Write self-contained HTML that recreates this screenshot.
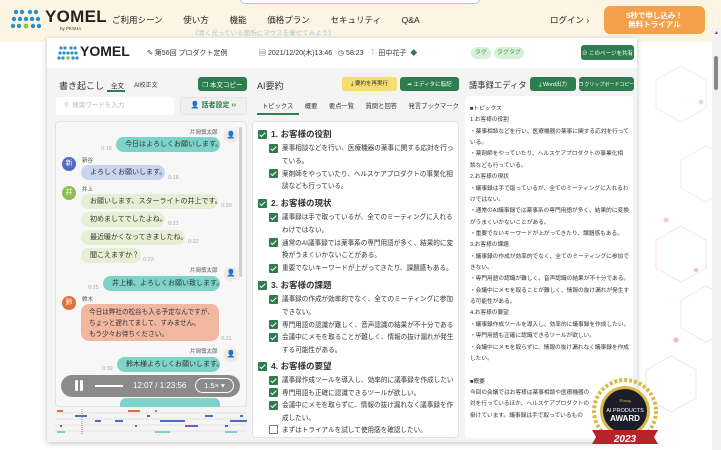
<!DOCTYPE html><html><head><meta charset="utf-8"><style>
*{box-sizing:border-box;margin:0;padding:0}
body{width:721px;height:450px;overflow:hidden;background:#fff;font-family:"Liberation Sans","Noto Sans CJK JP",sans-serif;color:#333;position:relative}
.a{position:absolute;white-space:nowrap}
.btn{position:absolute;background:#2e7d4f;color:#fff;border-radius:3px;font-size:6.5px;display:flex;align-items:center;justify-content:center;white-space:nowrap;overflow:hidden}
.bub{position:absolute;border-radius:9px;font-size:7px;padding:0 9px;height:15px;line-height:15px;color:#333;white-space:nowrap}
.t{position:absolute;font-size:5.5px;color:#aaa}
.nm{position:absolute;font-size:5.5px;color:#555}
.av{position:absolute;width:14px;height:14px;border-radius:50%;color:#fff;font-size:7px;text-align:center;line-height:14px}
.cb{display:inline-block;width:9px;height:9px;background:#2e7d4f;border-radius:1px;vertical-align:middle;margin-right:4px;position:relative}
.cb:after{content:"";position:absolute;left:3px;top:1px;width:2px;height:5px;border:solid #fff;border-width:0 1.3px 1.3px 0;transform:rotate(45deg)}
.blk{position:absolute;left:258px;width:200px;font-size:6.6px;line-height:11px;color:#333;white-space:nowrap;overflow:hidden}
.blk .h{font-size:8.5px;font-weight:bold;line-height:12px;margin-bottom:3px}
.blk .i{padding-left:11px;margin-bottom:1.5px}
.blk .c{padding-left:24px}
.ed{position:absolute;left:470px;top:104px;width:160px;font-size:5.7px;color:#333;white-space:nowrap;overflow:hidden}
.ed div{height:11.37px;line-height:11.37px}
</style></head><body>
<!-- bg hex -->
<svg class="a" style="left:636px;top:40px" width="85" height="410"><g fill="none" stroke="#eceef4" stroke-width="1"><path d="M20 40l25-14 25 14v28l-25 14-25-14z"/><path d="M45 120l25-14 25 14v28l-25 14-25-14z"/></g><g fill="none" stroke="#f6e0ea"><path d="M20 200l25-14 25 14v28l-25 14-25-14z"/><path d="M45 260l25-14 25 14v28l-25 14-25-14z"/><path d="M10 330l25-14 25 14v28l-25 14-25-14z"/></g><circle cx="30" cy="180" r="2.5" fill="#f6c8d8"/><circle cx="60" cy="230" r="2" fill="#f3b8cc"/><circle cx="40" cy="300" r="2.5" fill="#f3b8cc"/><circle cx="65" cy="62" r="2.5" fill="#d2e0f0"/></svg>
<!-- header -->
<div class="a" style="left:0;top:0;width:721px;height:42px;background:#fdf5e4"></div>
<div class="a" style="left:240px;top:-6px;width:240px;height:10px;border:1.5px solid #9ccfd2;border-radius:6px;background:#fff"></div>
<svg class="a" style="left:10px;top:8px" width="32" height="22"><g fill="#2e8ec8"><circle cx="6" cy="4" r="2.2"/><circle cx="12" cy="4" r="2.2"/><circle cx="20" cy="4" r="2.2"/><circle cx="26" cy="4" r="2.2"/><circle cx="4" cy="11" r="2.2"/><circle cx="10" cy="11" r="2.2"/><circle cx="22" cy="11" r="2.2"/><circle cx="28" cy="11" r="2.2"/><circle cx="3" cy="18" r="2.2"/><circle cx="9" cy="18" r="2.2"/><circle cx="23" cy="18" r="2.2"/><circle cx="29" cy="18" r="2.2"/></g><circle cx="16" cy="11" r="2.2" fill="#2e8ec8"/><circle cx="16" cy="18" r="2.4" fill="#8cc63f"/></svg>
<div class="a" style="left:45px;top:7px;font-size:17px;font-weight:bold;color:#222;letter-spacing:0.3px">YOMEL</div>
<div class="a" style="left:60px;top:26px;font-size:4.5px;color:#333">by PKSHA</div>
<div class="a" style="left:112px;top:14px;font-size:8.5px;color:#222;word-spacing:8px">ご利用シーン&nbsp; 使い方&nbsp; 機能&nbsp; 価格プラン&nbsp; セキュリティ&nbsp; Q&amp;A</div>
<div class="a" style="left:192px;top:27px;font-size:6.5px;color:#a9cbe0">《青く光っている箇所にマウスを乗せてみよう》</div>
<div class="a" style="left:550px;top:14px;font-size:8.5px;color:#222">ログイン ›</div>
<div class="a" style="left:604px;top:6px;width:101px;height:28px;background:#f5a04a;border-radius:6px;color:#fff;font-size:7.5px;font-weight:bold;text-align:center;line-height:9px;padding-top:5px">5秒で申し込み！<br>無料トライアル</div>
<div class="a" style="left:712px;top:28px;width:9px;height:422px;background:#f1f1f1"></div>
<div class="a" style="left:714px;top:30px;font-size:5px;color:#555">▲</div>
<div class="a" style="left:714px;top:56px;width:4px;height:34px;background:#888;border-radius:2px"></div>
<!-- app -->
<div class="a" style="left:47px;top:38px;width:590px;height:404px;background:#f4f4f4;box-shadow:0 1px 5px rgba(0,0,0,.25)"></div>
<div class="a" style="left:47px;top:38px;width:590px;height:30px;background:#fff"></div>
<svg class="a" style="left:57px;top:45px" width="22" height="15"><g fill="#2e8ec8"><circle cx="4" cy="3" r="1.6"/><circle cx="8" cy="3" r="1.6"/><circle cx="14" cy="3" r="1.6"/><circle cx="18" cy="3" r="1.6"/><circle cx="3" cy="8" r="1.6"/><circle cx="7" cy="8" r="1.6"/><circle cx="11" cy="8" r="1.6"/><circle cx="15" cy="8" r="1.6"/><circle cx="19" cy="8" r="1.6"/><circle cx="2" cy="13" r="1.6"/><circle cx="6" cy="13" r="1.6"/><circle cx="16" cy="13" r="1.6"/><circle cx="20" cy="13" r="1.6"/></g><circle cx="11" cy="13" r="1.7" fill="#8cc63f"/></svg>
<div class="a" style="left:80px;top:43px;font-size:14px;color:#222;font-weight:bold">YOMEL</div>
<div class="a" style="left:147px;top:48px;font-size:7px;color:#333">✎ 第56回 プロダクト定例</div>
<div class="a" style="left:259px;top:48px;font-size:7px;color:#333">▤ 2021/12/20(木)13:46 &nbsp; ◷ 58:23 &nbsp; <span style="color:#8cc;">Ｔ</span> 田中花子 &nbsp;<span style="color:#2e7d4f">◆</span></div>
<div class="a" style="left:471px;top:47px;width:20px;height:12px;background:#d8f0d8;border-radius:6px;font-size:6px;line-height:12px;text-align:center;color:#4a4">タグ</div>
<div class="a" style="left:494px;top:47px;width:30px;height:12px;background:#d8f0d8;border-radius:6px;font-size:6px;line-height:12px;text-align:center;color:#4a4">タグタグ</div>
<div class="btn" style="left:581px;top:45px;width:53px;height:15px;font-size:5.5px">⊘ このページを共有</div>
<!-- row2 -->
<div class="a" style="left:59px;top:79px;font-size:9px;color:#333">書き起こし</div>
<div class="a" style="left:111px;top:80px;font-size:6.5px;color:#222">全文</div>
<div class="a" style="left:107px;top:90px;width:18px;height:1.5px;background:#2e7d4f"></div>
<div class="a" style="left:134px;top:80px;font-size:6px;color:#333">AI校正文</div>
<div class="btn" style="left:198px;top:77px;width:49px;height:14px">❐ 本文コピー</div>
<div class="a" style="left:257px;top:79px;font-size:9px;color:#333">AI要約</div>
<div class="a" style="left:342px;top:77px;width:55px;height:14px;background:#f7dc6f;border-radius:3px;font-size:5.5px;text-align:center;line-height:14px;color:#333">⤓ 要約を再実行</div>
<div class="btn" style="left:400px;top:77px;width:59px;height:14px;font-size:5.5px">➦ エディタに転記</div>
<div class="a" style="left:469px;top:79px;font-size:8.3px;color:#333">議事録エディタ</div>
<div class="btn" style="left:530px;top:77px;width:46px;height:14px;font-size:5.5px">⤓ Word出力</div>
<div class="btn" style="left:579px;top:77px;width:55px;height:14px;font-size:5px">❐ クリップボードコピー</div>
<div class="a" style="left:56px;top:97px;width:118px;height:18px;background:#fff;border-radius:3px;font-size:6.5px;color:#bbb;padding-left:8px;line-height:18px">⚲ &nbsp;検索ワードを入力</div>
<div class="a" style="left:180px;top:97px;width:67px;height:18px;background:#f0f0f0;border:1px solid #e4e4e4;border-radius:3px;font-size:7px;color:#2e7d4f;text-align:center;line-height:16px;font-weight:bold">👤 話者設定 ››</div>
<div class="a" style="left:262px;top:101px;font-size:6.3px;color:#333;word-spacing:4px">トピックス&nbsp; 概要&nbsp; 要点一覧&nbsp; 質問と回答&nbsp; 発言ブックマーク</div>
<div class="a" style="left:257px;top:113px;width:42px;height:1.5px;background:#2e7d4f"></div>
<!-- left chat panel -->
<div class="a" style="left:55px;top:121px;width:192px;height:286px;background:#f7f7f7;border:1px solid #e2e2e2;border-radius:4px;overflow:hidden">
<div class="a" style="left:183px;top:5px;width:3px;height:150px;background:#d0d0d0;border-radius:2px"></div>
</div>
<div class="nm" style="left:190px;top:128px">片岡慎太郎</div>
<div class="av" style="left:224px;top:129px;background:#f2e8e0;color:#333">👤</div>
<div class="bub" style="left:116px;top:137px;width:104px;background:#7dd3c8">今日はよろしくお願いします。</div>
<div class="t" style="left:101px;top:146px">0:15</div>
<div class="av" style="left:62px;top:157px;background:#4f6cc0">新</div>
<div class="nm" style="left:82px;top:156px">新谷</div>
<div class="bub" style="left:81px;top:165px;width:84px;background:#c9d5ee">よろしくお願いします。</div>
<div class="t" style="left:168px;top:175px">0:18</div>
<div class="av" style="left:62px;top:186px;background:#8fbf4a">井</div>
<div class="nm" style="left:82px;top:185px">井上</div>
<div class="bub" style="left:81px;top:194px;width:137px;background:#e6efd3">お願いします、スターライトの井上です。</div>
<div class="t" style="left:221px;top:203px">0:20</div>
<div class="bub" style="left:81px;top:212px;width:84px;background:#e6efd3">初めましてでしたよね。</div>
<div class="t" style="left:168px;top:221px">0:21</div>
<div class="bub" style="left:81px;top:230px;width:104px;background:#e6efd3">最近暖かくなってきましたね。</div>
<div class="t" style="left:188px;top:239px">0:22</div>
<div class="bub" style="left:81px;top:248px;width:60px;background:#e6efd3">聞こえますか？</div>
<div class="t" style="left:143px;top:257px">0:23</div>
<div class="nm" style="left:190px;top:266px">片岡慎太郎</div>
<div class="av" style="left:224px;top:267px;background:#f2e8e0;color:#333">👤</div>
<div class="bub" style="left:103px;top:276px;width:117px;background:#7dd3c8">井上様、よろしくお願い致します。</div>
<div class="t" style="left:88px;top:285px">0:25</div>
<div class="av" style="left:62px;top:296px;background:#e0703a">鈴</div>
<div class="nm" style="left:82px;top:295px">鈴木</div>
<div class="a" style="left:81px;top:304px;width:138px;height:37px;background:#f1b7a0;border-radius:8px;font-size:6.6px;line-height:11px;padding:3px 8px;color:#333">今日は弊社の松谷も入る予定なんですが、<br>ちょっと遅れてまして、すみません。<br>もう少々お待ちください。</div>
<div class="t" style="left:221px;top:336px">0:31</div>
<div class="nm" style="left:190px;top:347px">片岡慎太郎</div>
<div class="av" style="left:224px;top:348px;background:#f2e8e0;color:#333">👤</div>
<div class="bub" style="left:117px;top:357px;width:103px;background:#7dd3c8">鈴木様よろしくお願いします。</div>
<div class="t" style="left:102px;top:366px">0:39</div>
<div class="a" style="left:61px;top:375px;width:179px;height:22px;background:rgba(120,120,120,.85);border-radius:11px"></div>
<div class="a" style="left:75px;top:380px;width:3px;height:11px;background:#fff;border-radius:1px"></div><div class="a" style="left:80px;top:380px;width:3px;height:11px;background:#fff;border-radius:1px"></div>
<div class="a" style="left:95px;top:385px;width:28px;height:2px;background:#fff"></div>
<div class="a" style="left:133px;top:381px;font-size:8px;color:#fff">12:07 / 1:23:56</div>
<div class="a" style="left:195px;top:378px;width:39px;height:15px;border:1px solid #fff;border-radius:8px;font-size:7.5px;color:#fff;text-align:center;line-height:13px">1.5× ▾</div>
<div class="bub" style="left:120px;top:398px;width:100px;height:9px;background:#7dd3c8;border-radius:6px 6px 0 0"></div>
<!-- timeline -->
<svg class="a" style="left:55px;top:409px" width="192" height="26"><g stroke="#e2e2e2" stroke-width="1"><line x1="0" y1="4" x2="192" y2="4"/><line x1="0" y1="10" x2="192" y2="10"/><line x1="0" y1="16" x2="192" y2="16"/><line x1="0" y1="22" x2="192" y2="22"/></g><line x1="27" y1="0" x2="27" y2="26" stroke="#888" stroke-dasharray="1,1"/><g stroke-width="2"><line x1="2" y1="2" x2="8" y2="2" stroke="#e0703a"/><line x1="73" y1="2" x2="85" y2="2" stroke="#e0703a"/><line x1="100" y1="2" x2="102" y2="2" stroke="#e0703a"/><line x1="20" y1="7" x2="32" y2="7" stroke="#4f6cc0"/><line x1="92" y1="7" x2="95" y2="7" stroke="#4f6cc0"/><line x1="150" y1="7" x2="158" y2="7" stroke="#4f6cc0"/><line x1="185" y1="7" x2="188" y2="7" stroke="#4f6cc0"/><line x1="40" y1="12" x2="46" y2="12" stroke="#4f6cc0"/><line x1="60" y1="12" x2="68" y2="12" stroke="#4f6cc0"/><line x1="105" y1="12" x2="130" y2="12" stroke="#4f6cc0"/><line x1="175" y1="12" x2="192" y2="12" stroke="#4f6cc0"/><line x1="130" y1="17" x2="143" y2="17" stroke="#8e4fc0"/><line x1="5" y1="17" x2="7" y2="17" stroke="#4f6cc0"/><line x1="80" y1="17" x2="82" y2="17" stroke="#4f6cc0"/><line x1="170" y1="17" x2="173" y2="17" stroke="#4f6cc0"/><line x1="2" y1="23" x2="10" y2="23" stroke="#7dd3c8"/><line x1="100" y1="23" x2="115" y2="23" stroke="#7dd3c8"/><line x1="170" y1="23" x2="182" y2="23" stroke="#7dd3c8"/></g></svg>
<!-- middle panel -->
<div class="a" style="left:252px;top:121px;width:207px;height:317px;background:#fff;border:1px solid #e2e2e2;border-radius:4px"></div>
<div class="blk" style="top:128px">
<div class="h"><span class="cb"></span>1. お客様の役割</div>
<div class="i"><span class="cb"></span>薬事相談などを行い、医療機器の薬事に関する応対を行っ</div><div class="c">ている。</div>
<div class="i" style="margin-top:2px"><span class="cb"></span>薬剤師をやっていたり、ヘルスケアプロダクトの事業化相</div><div class="c">談なども行っている。</div>
</div>
<div class="blk" style="top:197px">
<div class="h"><span class="cb"></span>2. お客様の現状</div>
<div class="i"><span class="cb"></span>議事録は手で取っているが、全てのミーティングに入れる</div><div class="c">わけではない。</div>
<div class="i" style="margin-top:2px"><span class="cb"></span>通常のAI議事録では薬事系の専門用語が多く、結果的に変</div><div class="c">換がうまくいかないことがある。</div>
<div class="i" style="margin-top:2px"><span class="cb"></span>重要でないキーワードが上がってきたり、課題感もある。</div>
</div>
<div class="blk" style="top:279px">
<div class="h"><span class="cb"></span>3. お客様の課題</div>
<div class="i"><span class="cb"></span>議事録の作成が効率的でなく、全てのミーティングに参加</div><div class="c">できない。</div>
<div class="i" style="margin-top:2px"><span class="cb"></span>専門用語の認識が難しく、音声認識の結果が不十分である</div>
<div class="i"><span class="cb"></span>会議中にメモを取ることが難しく、情報の抜け漏れが発生</div><div class="c">する可能性がある。</div>
</div>
<div class="blk" style="top:360px">
<div class="h"><span class="cb"></span>4. お客様の要望</div>
<div class="i"><span class="cb"></span>議事録作成ツールを導入し、効率的に議事録を作成したい</div>
<div class="i"><span class="cb"></span>専門用語も正確に認識できるツールが欲しい。</div>
<div class="i"><span class="cb"></span>会議中にメモを取らずに、情報の抜け漏れなく議事録を作</div><div class="c">成したい。</div>
<div class="i" style="margin-top:1px"><span class="cb" style="background:#fff;border:1px solid #777"></span>まずはトライアルを試して使用感を確認したい。</div>
</div>
<!-- right editor -->
<div class="a" style="left:465px;top:96px;width:168px;height:342px;background:#fff;border-radius:4px"></div>
<div class="ed"><div>■トピックス</div><div>1.お客様の役割</div><div>・薬事相談などを行い、医療機器の薬事に関する応対を行って</div><div>いる。</div><div>・薬剤師をやっていたり、ヘルスケアプロダクトの事業化相</div><div>談なども行っている。</div><div>2.お客様の現状</div><div>・議事録は手で取っているが、全てのミーティングに入れるわ</div><div>けではない。</div><div>・通常のAI議事録では薬事系の専門用語が多く、結果的に変換</div><div>がうまくいかないことがある。</div><div>・重要でないキーワードが上がってきたり、課題感もある。</div><div>3.お客様の課題</div><div>・議事録の作成が効率的でなく、全てのミーティングに参加で</div><div>きない。</div><div>・専門用語の認識が難しく、音声認識の結果が不十分である。</div><div>・会議中にメモを取ることが難しく、情報の抜け漏れが発生す</div><div>る可能性がある。</div><div>4.お客様の要望</div><div>・議事録作成ツールを導入し、効率的に議事録を作成したい。</div><div>・専門用語も正確に認識できるツールが欲しい。</div><div>・会議中にメモを取らずに、情報の抜け漏れなく議事録を作成</div><div>したい。</div><div></div><div>■概要</div><div>今回の会議ではお客様は薬事相談や医療機器の</div><div>対を行っているほか、ヘルスケアプロダクトの</div><div>掛けています。議事録は手で取っているもの</div></div>
<!-- award -->
<svg class="a" style="left:590px;top:376px" width="70" height="74"><circle cx="35" cy="35" r="31" fill="none" stroke="#d9b94a" stroke-width="4" stroke-dasharray="3,2"/><circle cx="35" cy="35" r="25" fill="#d9b94a"/><circle cx="35" cy="35" r="22" fill="#1d1d2a"/><text x="35" y="26" font-size="4" fill="#d9b94a" text-anchor="middle" font-family="Liberation Serif">Pitmag</text><text x="35" y="36" font-size="5.5" fill="#fff" text-anchor="middle" font-family="Liberation Sans">AI PRODUCTS</text><text x="35" y="45" font-size="8" fill="#fff" text-anchor="middle" font-weight="bold" font-family="Liberation Sans">AWARD</text><path d="M2 54h66l-4 7 4 7H2l4-7z" fill="#b8232a"/><text x="35" y="66" font-size="10" fill="#fff" text-anchor="middle" font-style="italic" font-weight="bold" font-family="Liberation Sans">2023</text></svg>
</body></html>
